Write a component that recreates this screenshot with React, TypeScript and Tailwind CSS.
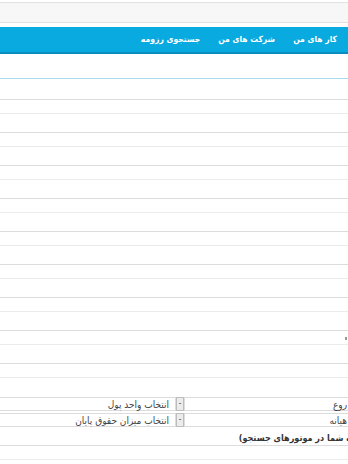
import React from 'react';

const fieldTops = [99, 132, 165, 199, 231, 264, 297, 330, 363];

function Field({ mark }: { mark?: boolean }) {
  return (
    <div className="relative h-[15px] border-t border-b border-t-[#dcdcdc] border-b-[#ececec] bg-white">
      {mark && <span className="absolute right-[1px] top-[6px] h-[3px] w-[2px] bg-[#999]" />}
    </div>
  );
}

function SelectBox({ value }: { value: string }) {
  return (
    <div className="-ml-[10px] flex h-[14px] items-center">
      <div className="flex h-full w-[8px] items-center justify-center border border-[#bdbdbd] bg-[#ececec] text-[8px] leading-none text-[#444]">
        -
      </div>
      <div className="ml-[6px] flex h-full flex-1 items-center border border-[#dcdcdc] pr-[6px] text-[10px] text-[#444]">
        {value}
      </div>
    </div>
  );
}

export default function App() {
  return (
    <div
      className="h-[464px] w-[348px] overflow-hidden bg-white"
      dir="rtl"
      style={{ fontFamily: '"DejaVu Sans Condensed", "DejaVu Sans", Tahoma, sans-serif' }}
    >
      {/* top strip */}
      <div className="mt-[2px] h-[21px] border-t border-b border-t-[#e2e2e2] border-b-[#e0e0e0] bg-[#f7f7f7]" />

      {/* nav */}
      <div className="mt-[4px] flex h-[27px] items-center gap-[18px] border-b-2 border-[#0a8dbe] bg-[#09aadf] pr-[11px] text-[8.5px] font-bold text-white">
        <span>کار های من</span>
        <span>شرکت های من</span>
        <span>جستجوی رزومه</span>
      </div>

      <div className="mt-[24px] h-[1px] bg-[#a9daf0]" />

      {/* form fields */}
      <div className="mt-[20px] flex flex-col gap-[18px]">
        {fieldTops.map((t, i) => (
          <Field key={t} mark={i === 7} />
        ))}
      </div>

      {/* salary */}
      <div className="mt-[19px] flex flex-col gap-[2px]">
        <div className="flex">
          <div className="flex h-[14px] w-[164px] items-center border-t border-b border-l border-[#dcdcdc] pr-[1px] text-[10px] text-[#444]">
            روع
          </div>
          <div className="flex-1">
            <SelectBox value="انتخاب واحد پول" />
          </div>
        </div>
        <div className="flex">
          <div className="flex h-[14px] w-[164px] items-center border-t border-b border-l border-[#dcdcdc] pr-[1px] text-[10px] text-[#444]">
            هیانه
          </div>
          <div className="flex-1">
            <SelectBox value="انتخاب میزان حقوق پایان" />
          </div>
        </div>
      </div>

      <div className="-mr-[3px] mt-[5px] whitespace-nowrap text-[9px] font-bold leading-[12px] text-[#333]">
        ه شما در موتورهای جستجو)
      </div>
      <div className="mt-[1px]">
        <Field />
      </div>
    </div>
  );
}
